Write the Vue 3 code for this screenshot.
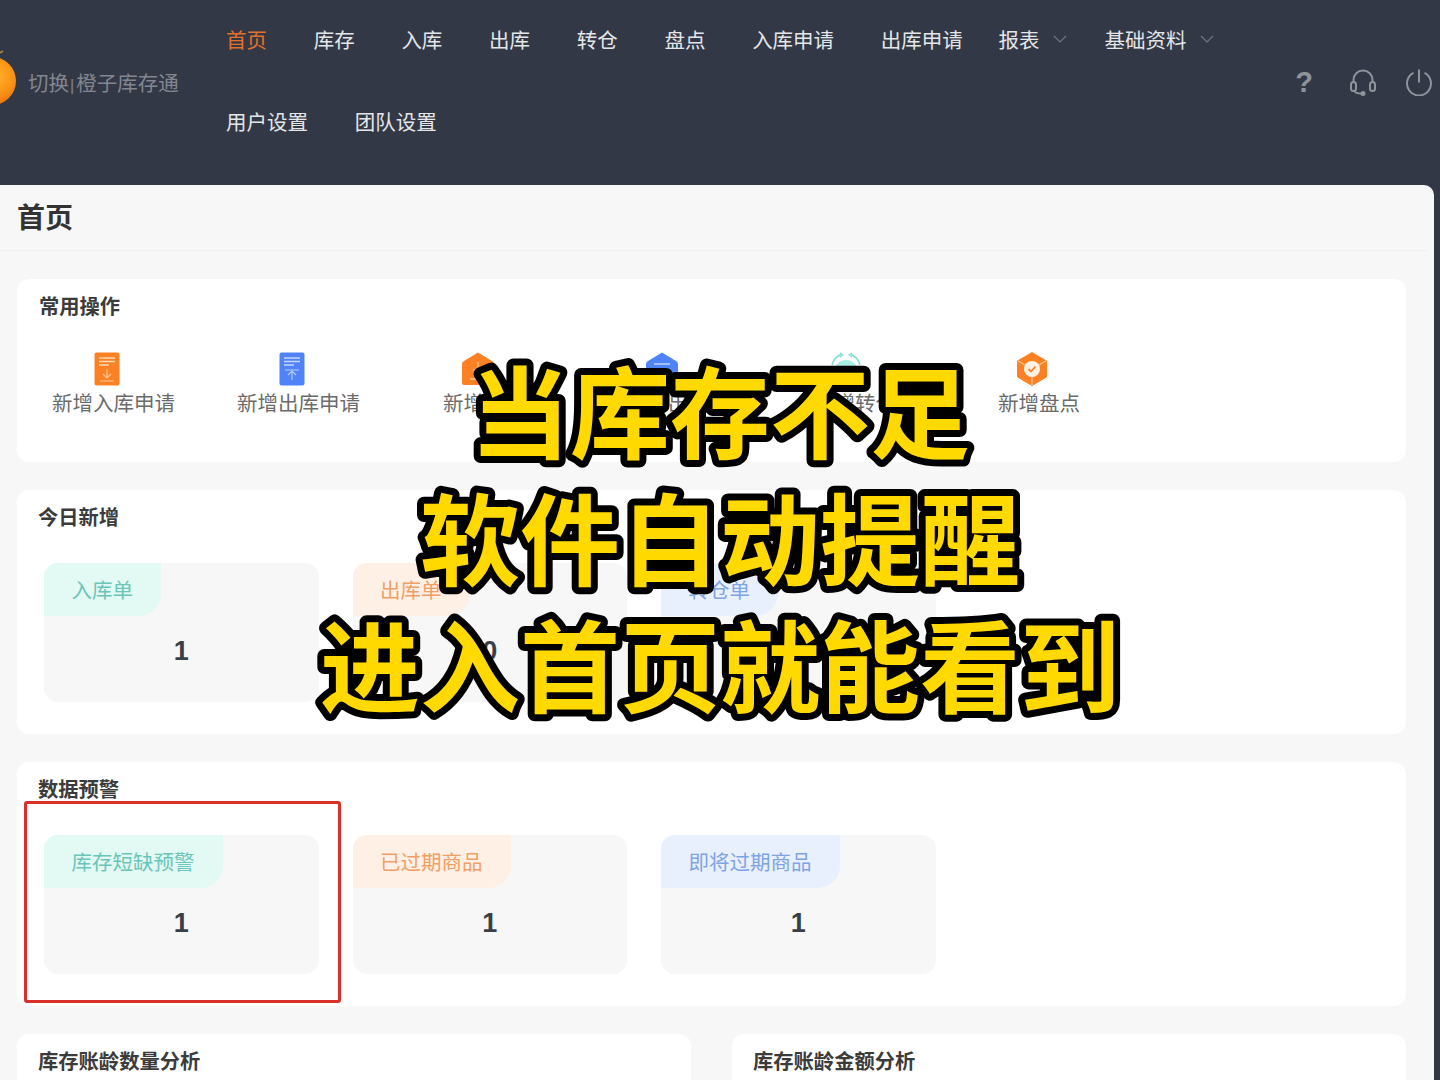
<script setup>
const navRows = [
  [
    { text: '首页', active: true },
    { text: '库存' },
    { text: '入库' },
    { text: '出库' },
    { text: '转仓' },
    { text: '盘点' },
    { text: '入库申请' },
    { text: '出库申请', tight: true },
    { text: '报表', arrow: true },
    { text: '基础资料', arrow: true },
  ],
  [{ text: '用户设置' }, { text: '团队设置' }],
];

const ops = [
  { label: '新增入库申请', icon: 'docIn' },
  { label: '新增出库申请', icon: 'docOut' },
  { label: '新增入库', icon: 'boxIn' },
  { label: '新增出库', icon: 'boxOut' },
  { label: '新增转仓', icon: 'transfer' },
  { label: '新增盘点', icon: 'check' },
];

const today = [
  { label: '入库单', value: 1, tone: 'teal' },
  { label: '出库单', value: 0, tone: 'orange' },
  { label: '转仓单', value: 0, tone: 'blue' },
];

const warnings = [
  { label: '库存短缺预警', value: 1, tone: 'teal' },
  { label: '已过期商品', value: 1, tone: 'orange' },
  { label: '即将过期商品', value: 1, tone: 'blue' },
];

const captionLines = [
  { text: '当库存不足', y: 451 },
  { text: '软件自动提醒', y: 578 },
  { text: '进入首页就能看到', y: 705 },
];
</script>

<template>
  <div class="page">
    <header class="topbar">
      <div class="brand">
        <svg class="logo" width="17" height="64" viewBox="0 0 17 64">
          <defs>
            <radialGradient id="orange" cx="0.55" cy="0.4" r="0.7">
              <stop offset="0" stop-color="#ffb52a" />
              <stop offset="0.6" stop-color="#f98f14" />
              <stop offset="1" stop-color="#e4610c" />
            </radialGradient>
          </defs>
          <path d="M0 3 L3 1" stroke="#a8812f" stroke-width="2" />
          <circle cx="-8" cy="31" r="24" fill="url(#orange)" />
        </svg>
        <span class="brand-text">切换<i class="sep">|</i>橙子库存通</span>
      </div>

      <nav class="nav">
        <div v-for="(row, i) in navRows" :key="i" class="nav-row">
          <a
            v-for="item in row"
            :key="item.text"
            class="nav-item"
            :class="{ active: item.active, tight: item.tight, 'has-arrow': item.arrow }"
          >
            {{ item.text }}
            <svg v-if="item.arrow" class="arrow" width="14" height="8" viewBox="0 0 14 8">
              <path d="M1 1 L7 7 L13 1" fill="none" stroke="#6f7581" stroke-width="1.2" />
            </svg>
          </a>
        </div>
      </nav>

      <div class="tools">
        <span class="help">?</span>
        <svg class="headset" width="28" height="28" viewBox="0 0 28 28" fill="none" stroke="#8f939b" stroke-width="2">
          <path d="M4.500 15 V12 A9.500 9.500 0 0 1 23.500 12 V15" />
          <rect x="2" y="14" width="5" height="9" rx="2.500" />
          <rect x="21" y="14" width="5" height="9" rx="2.500" />
          <path d="M5 23 Q7 25.500 12 25.500" />
          <circle cx="14" cy="25.500" r="1.500" fill="#8f939b" />
        </svg>
        <svg class="power" width="28" height="28" viewBox="0 0 28 28" fill="none" stroke="#8f939b" stroke-width="2">
          <path d="M8.500 4.800 A12 12 0 1 0 19.500 4.800" />
          <path d="M14 1.500 V14.500" />
        </svg>
      </div>
    </header>

    <main class="panel">
      <h1 class="page-title">首页</h1>

      <div class="content">
        <section class="card ops-card">
          <h2 class="card-title">常用操作</h2>
          <div class="ops">
            <div v-for="op in ops" :key="op.icon" class="op">
              <svg class="op-icon" width="34" height="34" viewBox="0 0 34 34">
                <template v-if="op.icon === 'docIn'">
                  <rect x="4.500" y="0.500" width="25" height="33" rx="2" fill="#fb8124" />
                  <path d="M9 6 H25 M9 9.500 H25 M9 13 H19" stroke="#ffd9b8" stroke-width="1.400" />
                  <path d="M17 17 V26 M13 22 L17 26 L21 22 M10 29 H24" stroke="#ffc797" stroke-width="1.200" fill="none" />
                </template>
                <template v-else-if="op.icon === 'docOut'">
                  <rect x="4.500" y="0.500" width="25" height="33" rx="2" fill="#4f83f7" />
                  <path d="M9 6 H25 M9 9.500 H25 M9 13 H19" stroke="#c6d8ff" stroke-width="1.400" />
                  <path d="M10 18 H24 M17 18 V28 M13 23 L17 19 L21 23" stroke="#b5ccff" stroke-width="1.200" fill="none" />
                </template>
                <template v-else-if="op.icon === 'boxIn'">
                  <path d="M17 0.500 L31 9 Q33 10 33 12 V31 Q33 33 31 33 H3 Q1 33 1 31 V12 Q1 10 3 9 Z" fill="#fb8124" />
                  <path d="M17 10 V22 M12 17 L17 22 L22 17 M9 27 H25" stroke="#ffc797" stroke-width="1.300" fill="none" />
                </template>
                <template v-else-if="op.icon === 'boxOut'">
                  <path d="M17 0.500 L31 9 Q33 10 33 12 V31 Q33 33 31 33 H3 Q1 33 1 31 V12 Q1 10 3 9 Z" fill="#4f83f7" />
                  <path d="M9 12 H25" stroke="#c6d8ff" stroke-width="1.400" />
                </template>
                <template v-else-if="op.icon === 'transfer'">
                  <circle cx="17" cy="20" r="12" fill="#a9eee2" />
                  <path d="M3 13 A15 15 0 0 1 12 2.500 M22 2.500 A15 15 0 0 1 31 13" fill="none" stroke="#7be0cf" stroke-width="1.500" />
                  <path d="M11 1 L14 3 L11 5 M23 1 L20 3 L23 5" fill="none" stroke="#7be0cf" stroke-width="1.200" />
                </template>
                <template v-else>
                  <path d="M17 0.500 L31.500 9 V25 L17 33.500 L2.500 25 V9 Z" fill="#fb8124" stroke="#fb8124" stroke-linejoin="round" />
                  <path d="M3 9 L11 13.500 M31 9 L23 13.500 M17 33 V25" stroke="#ffc797" stroke-width="1.200" />
                  <circle cx="17" cy="17" r="8" fill="#fff1e4" />
                  <path d="M13.500 17 L16 19.500 L20.500 14.500" fill="none" stroke="#fb8124" stroke-width="1.800" />
                </template>
              </svg>
              <span class="op-label">{{ op.label }}</span>
            </div>
          </div>
        </section>

        <section class="card stat-card">
          <h2 class="card-title">今日新增</h2>
          <div class="stats">
            <div v-for="s in today" :key="s.label" class="stat">
              <div class="stat-tag" :class="s.tone">{{ s.label }}</div>
              <div class="stat-value">{{ s.value }}</div>
            </div>
          </div>
        </section>

        <section class="card stat-card">
          <h2 class="card-title">数据预警</h2>
          <div class="stats">
            <div v-for="s in warnings" :key="s.label" class="stat">
              <div class="stat-tag" :class="s.tone">{{ s.label }}</div>
              <div class="stat-value">{{ s.value }}</div>
            </div>
          </div>
        </section>

        <div class="two-col">
          <section class="card bottom-card">
            <h2 class="card-title">库存账龄数量分析</h2>
          </section>
          <section class="card bottom-card">
            <h2 class="card-title">库存账龄金额分析</h2>
          </section>
        </div>
      </div>
    </main>

    <div class="highlight"></div>

    <svg class="caption" width="1440" height="1080" viewBox="0 0 1440 1080">
      <text v-for="line in captionLines" :key="line.text" x="720" :y="line.y" text-anchor="middle">
        {{ line.text }}
      </text>
    </svg>
  </div>
</template>

<style scoped>
.page {
  position: relative;
  width: 1440px;
  height: 1080px;
  overflow: hidden;
  background: #323846;
  font-family: "Liberation Sans", "Noto Sans CJK SC", sans-serif;
}

.topbar {
  display: flex;
  align-items: flex-start;
  height: 185px;
}

.brand {
  display: flex;
  align-items: center;
  width: 226px;
  height: 164px;
  flex-shrink: 0;
}

.logo {
  flex-shrink: 0;
}

.brand-text {
  margin-left: 11px;
  font-size: 20.5px;
  color: #82868f;
  white-space: nowrap;
}

.sep {
  margin: 0 2px 0 1px;
  font-size: 16px;
  font-style: normal;
}

.nav {
  width: 1040px;
  margin-top: -2px;
  flex-shrink: 0;
}

.nav-row {
  display: flex;
}

.nav-item {
  display: flex;
  align-items: center;
  height: 82px;
  margin-right: 46.7px;
  font-size: 20.5px;
  color: #e4e6e8;
  white-space: nowrap;
}

.nav-item.active {
  color: #e5702a;
}

.nav-item.tight {
  margin-right: 35.8px;
}

.nav-item.has-arrow {
  margin-right: 38px;
}

.arrow {
  margin-left: 13px;
}

.tools {
  display: flex;
  align-items: center;
  height: 164px;
  margin-left: 28px;
}

.help {
  width: 20px;
  font-size: 29px;
  font-weight: 700;
  text-align: center;
  color: #8f939b;
}

.headset {
  margin-left: 35px;
}

.power {
  margin-left: 28px;
}

.panel {
  width: 1434px;
  height: 895px;
  background: #f7f7f7;
  border-radius: 0 10px 0 0;
}

.page-title {
  height: 65px;
  margin: 0 6px 0 0;
  padding-left: 17px;
  font-size: 28px;
  font-weight: 700;
  line-height: 68px;
  color: #333;
  border-bottom: 1px solid #f0f0f0;
}

.content {
  display: flex;
  flex-direction: column;
  gap: 28px;
  width: 1389px;
  margin: 28px 0 0 17px;
}

.card {
  background: #fff;
  border-radius: 12px;
}

.card-title {
  margin: 0;
  font-size: 20.3px;
  font-weight: 700;
  line-height: 30px;
  color: #3b3b3b;
}

.ops-card {
  height: 183px;
  padding: 13px 0 0 22px;
  box-sizing: border-box;
}

.ops {
  display: flex;
  margin: 30px 0 0 13px;
}

.op {
  display: flex;
  flex-direction: column;
  align-items: flex-start;
  width: 185px;
  flex-shrink: 0;
}

.op:nth-child(2) {
  width: 206px;
}

.op:nth-child(3) {
  width: 184px;
}

.op:nth-child(4) {
  width: 187px;
}

.op:nth-child(5) {
  width: 184px;
}

.op-icon {
  align-self: flex-start;
  margin-left: 38px;
}

.op:nth-child(3) .op-icon,
.op:nth-child(4) .op-icon {
  margin-left: 18px;
}

.op:nth-child(5) .op-icon {
  margin-left: 15px;
}

.op:nth-child(6) .op-icon {
  margin-left: 17px;
}

.op-label {
  margin-top: 2px;
  font-size: 20.5px;
  line-height: 32px;
  color: #6b6b6b;
  white-space: nowrap;
}

.stat-card {
  height: 244px;
  padding: 13px 0 0 21px;
  box-sizing: border-box;
}

.stats {
  display: flex;
  gap: 34px;
  margin: 30px 0 0 6px;
}

.stat {
  width: 274.500px;
  height: 139px;
  overflow: hidden;
  background: #f7f7f7;
  border-radius: 14px;
}

.stat-tag {
  display: inline-block;
  height: 53px;
  padding: 0 28px 0 27.5px;
  font-size: 20.5px;
  line-height: 55px;
  border-bottom-right-radius: 22px;
}

.stat-tag.teal {
  color: #6ac6b8;
  background: #e2f9f4;
}

.stat-tag.orange {
  color: #f0a066;
  background: #fff0e5;
}

.stat-tag.blue {
  color: #7fa4e6;
  background: #e9f0fd;
}

.stat-value {
  margin-top: 13px;
  font-size: 27px;
  font-weight: 700;
  line-height: 44px;
  text-align: center;
  color: #3a3f47;
}

.two-col {
  display: flex;
  justify-content: space-between;
}

.bottom-card {
  width: 674px;
  height: 200px;
  padding: 13px 0 0 21px;
  box-sizing: border-box;
}

.highlight {
  position: absolute;
  top: 801px;
  left: 24px;
  width: 317px;
  height: 202px;
  box-sizing: border-box;
  border: 3px solid #d9302a;
  border-radius: 3px;
}

.caption {
  position: absolute;
  top: 0;
  left: 0;
  pointer-events: none;
}

.caption text {
  font-family: "Noto Sans CJK SC", sans-serif;
  font-size: 100px;
  font-weight: 700;
  fill: #ffd900;
  stroke: #000;
  stroke-width: 14px;
  stroke-linejoin: round;
  paint-order: stroke fill;
}
</style>

<style>
html,
body {
  margin: 0;
  background: #323846;
}
</style>
